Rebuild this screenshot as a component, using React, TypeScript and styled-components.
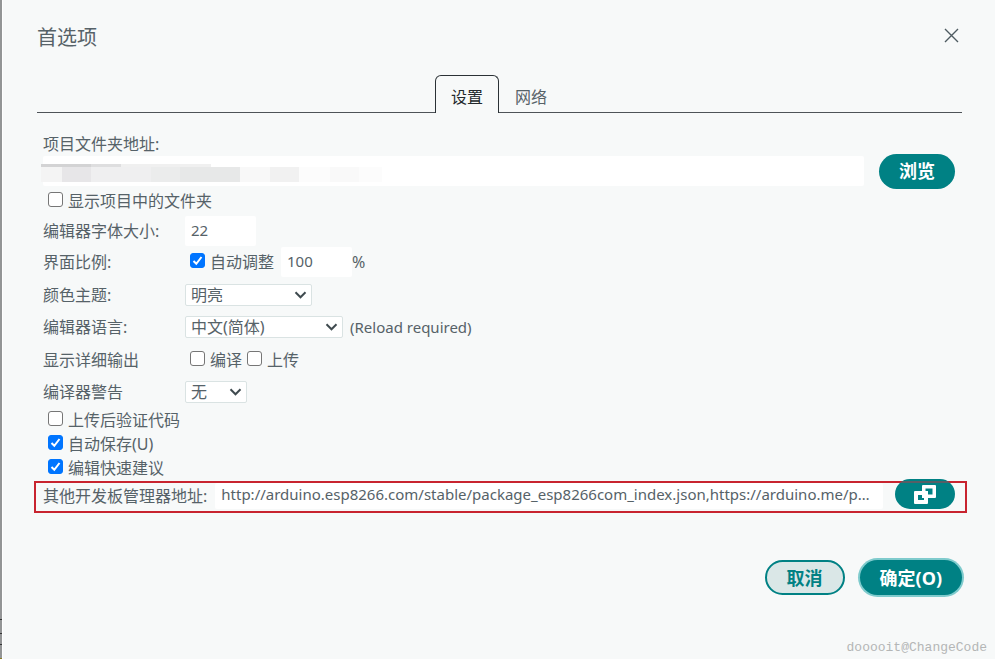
import React from "react";
import styled, { createGlobalStyle, css } from "styled-components";

const GlobalStyle = createGlobalStyle`
  * { box-sizing: border-box; }
  body {
    margin: 0;
    background: #f7f9f9;
    color: #566268;
    font: 16px/24px "Noto Sans", "Noto Sans CJK SC", sans-serif;
  }
  button, input, select { font: inherit; color: inherit; margin: 0; }
`;

const Dialog = styled.main`
  position: relative;
  display: flex;
  flex-direction: column;
  min-height: 100vh;
  padding: 20px 33px 0 34px;
  border-left: 1px solid #ffffff;
  margin-left: 2px;
`;

const BackdropEdge = styled.div`
  position: fixed;
  inset: 0 auto 0 0;
  width: 2px;
  background:
    linear-gradient(#333 0 0) 0 calc(100% - 39px) / 2px 1px no-repeat,
    linear-gradient(#333 0 0) 0 calc(100% - 25px) / 2px 1px no-repeat,
    linear-gradient(#333 0 0) 0 calc(100% - 14px) / 2px 1px no-repeat,
    linear-gradient(#8a7a20 0 0) 0 100% / 2px 1px no-repeat,
    #939596;
`;

const Header = styled.header`
  display: flex;
  justify-content: space-between;
  align-items: center;
  height: 32px;
`;

const Title = styled.h1`
  margin: 0;
  padding-top: 4px;
  font-size: 20px;
  font-weight: 400;
  line-height: 32px;
`;

const CloseButton = styled.button`
  display: flex;
  padding: 2px 3px 4px;
  border: 0;
  background: none;
`;

const Tabs = styled.div`
  display: flex;
  justify-content: center;
  height: 38px;
  margin-top: 23px;
  padding-right: 1px;
  border-bottom: 1px solid #4e5358;
`;

const Tab = styled.button<{ $active?: boolean }>`
  height: 38px;
  padding: 4px 15px 0;
  border: 1px solid transparent;
  border-bottom: 0;
  border-radius: 6px 6px 0 0;
  background: none;
  ${(p) =>
    p.$active &&
    css`
      border-color: #2b3236;
      background: #f7f9f9;
      color: #23292c;
    `}
`;

const Settings = styled.form`
  display: flex;
  flex-direction: column;
`;

const Panel = styled.section`
  display: flex;
  flex-direction: column;
  padding: 19px 7px 0 6px;
`;

const Row = styled.div<{ $height: number }>`
  display: flex;
  align-items: center;
  height: ${(p) => p.$height}px;
`;

const RowLabel = styled.label`
  flex: 0 0 142px;
`;

const RowCaption = styled.span`
  flex: 0 0 142px;
`;

const PlainLabel = styled.label`
  white-space: nowrap;
`;

const LocationField = styled.div`
  position: relative;
  flex: 1;
  display: flex;
  margin-right: 15px;
`;

const TextInput = styled.input<{ $width?: number }>`
  ${(p) => (p.$width ? `width: ${p.$width}px;` : "flex: 1; min-width: 0;")}
  height: 30px;
  padding: 0 6px 2px;
  border: 0;
  border-radius: 2px;
  background: #ffffff;
  font-size: 15px;
  text-overflow: ellipsis;
`;

const Redaction = styled.svg`
  position: absolute;
  left: -2px;
  top: 8px;
  pointer-events: none;
`;

const Check = styled.label`
  display: flex;
  align-items: center;
  gap: 5px;
  padding-left: 5px;
  white-space: nowrap;
`;

const CheckBox = styled.input.attrs({ type: "checkbox" })`
  appearance: none;
  width: 15px;
  height: 15px;
  margin-bottom: 3px;
  border: 1px solid #767676;
  border-radius: 3px;
  background: #ffffff;
  &:checked {
    border-color: #0075ff;
    background: #0075ff
      url("data:image/svg+xml,%3Csvg xmlns='http://www.w3.org/2000/svg' viewBox='0 0 13 13'%3E%3Cpath d='M2.5 7l2.8 2.8L10.5 3' fill='none' stroke='white' stroke-width='2'/%3E%3C/svg%3E")
      center / 13px 13px no-repeat;
  }
`;

const ScaleField = styled.div`
  display: flex;
  align-items: center;
  margin-left: 7px;
`;

const SelectBox = styled.div<{ $width: number }>`
  position: relative;
  display: flex;
  width: ${(p) => p.$width}px;
`;

const Select = styled.select`
  appearance: none;
  flex: 1;
  height: 22px;
  padding: 0 5px;
  border: 1px solid #dae3e3;
  border-radius: 2px;
  background: #ffffff;
  line-height: 20px;
`;

const Chevron = styled.svg`
  position: absolute;
  right: 5px;
  top: 7px;
  pointer-events: none;
`;

const Hint = styled.span`
  margin-left: 7px;
  font-size: 15px;
`;

const PillButton = styled.button<{ $kind?: "outline" | "focus" }>`
  display: flex;
  align-items: center;
  justify-content: center;
  height: 35px;
  padding: 0 20px;
  border: 0;
  border-radius: 20px;
  background: #008184;
  color: #ffffff;
  font-size: 18px;
  font-weight: 700;
  ${(p) =>
    p.$kind === "outline" &&
    css`
      border: 2px solid #008184;
      background: #dae7e7;
      color: #008184;
    `}
  ${(p) =>
    p.$kind === "focus" &&
    css`
      box-shadow: 0 0 0 2px #7fcbcd;
    `}
`;

const WindowsButton = styled(PillButton)`
  z-index: 1;
  width: 60px;
  height: 30px;
  padding: 0;
  margin-bottom: 4px;
  background: linear-gradient(#008184 2px, #575f66 2px 4px, #008184 4px);
`;

const UrlRow = styled.div`
  position: relative;
  display: flex;
  align-items: center;
  height: 34px;
`;

const Highlight = styled.div`
  position: absolute;
  inset: 2px -12px 0 -9px;
  border: 2px solid #c8242f;
  pointer-events: none;
`;

const UrlInput = styled(TextInput)`
  height: 26px;
  padding-bottom: 4px;
  margin: 0 12px 0 8px;
`;

const Footer = styled.footer`
  display: flex;
  justify-content: flex-end;
  gap: 15px;
  margin-top: 47px;
`;

const Watermark = styled.div`
  position: absolute;
  right: 8px;
  bottom: 1px;
  color: #b4b6b6;
  font: 13px/20px "Liberation Mono", monospace;
`;

const locationBlocks = [
  { x: 0, y: 0, width: 50, height: 3, fill: "#d3d3d4" },
  { x: 50, y: 0, width: 30, height: 3, fill: "#dededf" },
  { x: 80, y: 0, width: 90, height: 3, fill: "#f0f0f0" },
  { x: 0, y: 3, width: 21, height: 15, fill: "#f4f4f4" },
  { x: 21, y: 3, width: 29, height: 15, fill: "#e7e6e8" },
  { x: 50, y: 3, width: 60, height: 15, fill: "#efeff0" },
  { x: 110, y: 3, width: 29, height: 15, fill: "#ebecec" },
  { x: 139, y: 3, width: 60, height: 15, fill: "#e7e8e8" },
  { x: 199, y: 3, width: 30, height: 15, fill: "#f8f8f8" },
  { x: 229, y: 3, width: 29, height: 15, fill: "#f1f1f1" },
  { x: 258, y: 3, width: 31, height: 15, fill: "#fcfcfc" },
  { x: 289, y: 3, width: 29, height: 15, fill: "#f9f9f9" },
  { x: 318, y: 3, width: 23, height: 15, fill: "#fcfcfc" },
];

type PickerProps = { id: string; width: number; value: string };

function Picker({ id, width, value }: PickerProps) {
  return (
    <SelectBox $width={width}>
      <Select id={id}>
        <option>{value}</option>
      </Select>
      <Chevron width="13" height="8" viewBox="0 0 13 8">
        <path d="M1.5 1.3l5 5 5-5" fill="none" stroke="#3f4a4f" strokeWidth="2" />
      </Chevron>
    </SelectBox>
  );
}

function CheckItem({ children, checked }: { children: string; checked?: boolean }) {
  return (
    <Check>
      <CheckBox defaultChecked={checked} />
      {children}
    </Check>
  );
}

export default function App() {
  return (
    <>
      <GlobalStyle />
      <BackdropEdge />
      <Dialog>
        <Header>
          <Title>首选项</Title>
          <CloseButton aria-label="关闭">
            <svg width="15" height="15" viewBox="0 0 15 15">
              <path d="M1 1l13 13M14 1L1 14" fill="none" stroke="#4e5b61" strokeWidth="1.4" />
            </svg>
          </CloseButton>
        </Header>
        <Tabs role="tablist">
          <Tab role="tab" aria-selected="true" $active>设置</Tab>
          <Tab role="tab" aria-selected="false">网络</Tab>
        </Tabs>
        <Settings onSubmit={(e) => e.preventDefault()}>
          <Panel>
            <Row $height={23}>
              <PlainLabel htmlFor="location">项目文件夹地址:</PlainLabel>
            </Row>
            <Row $height={32}>
              <LocationField>
                <TextInput id="location" />
                <Redaction width="342" height="18" viewBox="0 0 342 18">
                  {locationBlocks.map((block, i) => (
                    <rect key={i} {...block} />
                  ))}
                </Redaction>
              </LocationField>
              <PillButton type="button">浏览</PillButton>
            </Row>
            <Row $height={28}><CheckItem>显示项目中的文件夹</CheckItem></Row>
            <Row $height={31}>
              <RowLabel htmlFor="size">编辑器字体大小:</RowLabel>
              <TextInput id="size" $width={71} defaultValue="22" />
            </Row>
            <Row $height={32}>
              <RowLabel htmlFor="scale">界面比例:</RowLabel>
              <CheckItem checked>自动调整</CheckItem>
              <ScaleField>
                <TextInput id="scale" $width={71} defaultValue="100" />
                <span>%</span>
              </ScaleField>
            </Row>
            <Row $height={33}>
              <RowLabel htmlFor="theme">颜色主题:</RowLabel>
              <Picker id="theme" width={127} value="明亮" />
            </Row>
            <Row $height={32}>
              <RowLabel htmlFor="language">编辑器语言:</RowLabel>
              <Picker id="language" width={158} value="中文(简体)" />
              <Hint>(Reload required)</Hint>
            </Row>
            <Row $height={33}>
              <RowCaption>显示详细输出</RowCaption>
              <CheckItem>编译</CheckItem>
              <CheckItem>上传</CheckItem>
            </Row>
            <Row $height={32}>
              <RowLabel htmlFor="warnings">编译器警告</RowLabel>
              <Picker id="warnings" width={62} value="无" />
            </Row>
            <Row $height={24}><CheckItem>上传后验证代码</CheckItem></Row>
            <Row $height={24}><CheckItem checked>自动保存(U)</CheckItem></Row>
            <Row $height={23}><CheckItem checked>编辑快速建议</CheckItem></Row>
            <UrlRow>
              <PlainLabel htmlFor="urls">其他开发板管理器地址:</PlainLabel>
              <UrlInput
                id="urls"
                defaultValue="http://arduino.esp8266.com/stable/package_esp8266com_index.json,https://arduino.me/packages/esp8266.json"
              />
              <WindowsButton type="button" aria-label="编辑地址">
                <svg width="22" height="19" viewBox="0 0 22 19" fill="#ffffff" fillRule="evenodd">
                  <path d="M9 0h12a1 1 0 0 1 1 1v11a1 1 0 0 1-1 1H8V1a1 1 0 0 1 1-1zM11.5 3.5v6h7v-6z" />
                  <path d="M1 6h13v12a1 1 0 0 1-1 1H1a1 1 0 0 1-1-1V7a1 1 0 0 1 1-1zM4 10v5h6v-5z" />
                </svg>
              </WindowsButton>
              <Highlight />
            </UrlRow>
          </Panel>
          <Footer>
            <PillButton type="button" $kind="outline">取消</PillButton>
            <PillButton type="submit" $kind="focus">确定(O)</PillButton>
          </Footer>
        </Settings>
        <Watermark>dooooit@ChangeCode</Watermark>
      </Dialog>
    </>
  );
}
